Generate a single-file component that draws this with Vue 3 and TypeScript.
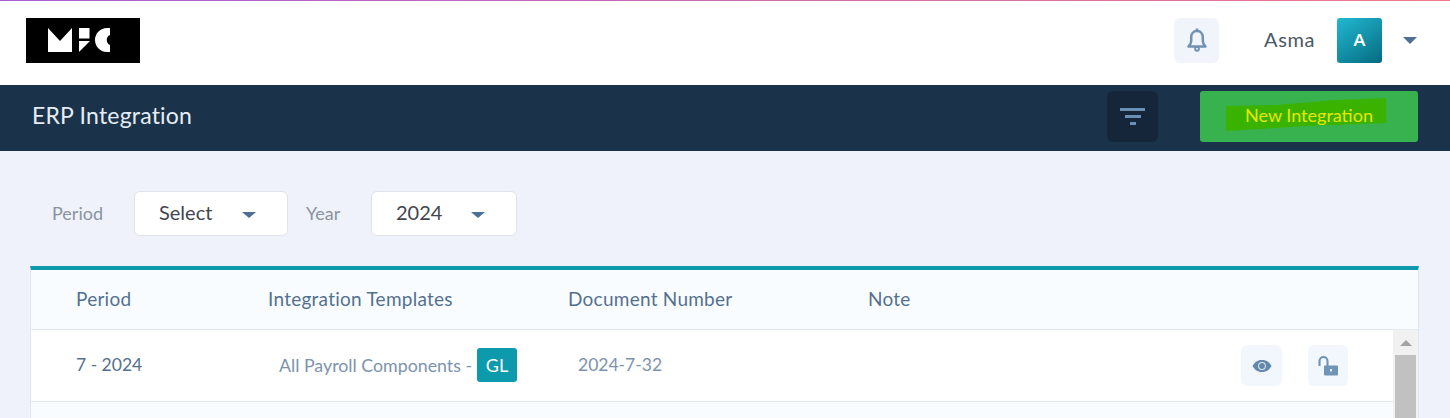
<script setup lang="ts">
interface Row {
  period: string
  template: string
  tag: string
  doc: string
}

const rows: Row[] = [
  { period: '7 - 2024', template: 'All Payroll Components -', tag: 'GL', doc: '2024-7-32' },
]
</script>

<template>
  <div class="page">
    <div class="progress"></div>
    <header class="topbar">
      <div class="logo">
        <svg width="62" height="24" viewBox="0 0 62 24">
          <path d="M0 0 L12 13 L24 0 V24 H0 Z" fill="#fff" />
          <rect x="31" y="0" width="10.5" height="10.5" fill="#fff" />
          <path d="M31 24 V13 H42 Z" fill="#fff" />
          <path d="M62 0 H59 A12 12 0 0 0 59 24 H62 V17 A5.5 5.5 0 0 1 62 7 Z" fill="#fff" />
        </svg>
      </div>
      <div class="top-right">
        <button class="bell">
          <svg width="20" height="24" viewBox="0 0 20 24" fill="none" stroke="#6f92b4" stroke-width="2.5">
            <path d="M10 3 C6 3 4.2 6 4.2 9.5 V13 C4.2 15.5 3.2 17 1.5 18.6 H18.5 C16.8 17 15.8 15.5 15.8 13 V9.5 C15.8 6 14 3 10 3 Z" stroke-linejoin="round" />
            <circle cx="10" cy="20.8" r="1.9" stroke-width="1.9" />
            <path d="M10 0.5 V3" />
          </svg>
        </button>
        <span class="user">Asma</span>
        <div class="avatar">A</div>
        <span class="caret user-caret"></span>
      </div>
    </header>

    <div class="subbar">
      <h1>ERP Integration</h1>
      <div class="sub-actions">
        <button class="filter-btn">
          <span class="f1"></span><span class="f2"></span><span class="f3"></span>
        </button>
        <button class="new-btn">
          <svg class="marker" width="160" height="33" viewBox="0 0 160 33" preserveAspectRatio="none">
            <path d="M0 8 L50 7 L110 2 L160 0 V25 L80 28 L0 33 Z" fill="#39b300" />
          </svg>
          <span>New Integration</span>
        </button>
      </div>
    </div>

    <main class="content">
      <div class="filters">
        <label class="lbl lbl-period">Period</label>
        <div class="select select-period">
          <span>Select</span><span class="caret"></span>
        </div>
        <label class="lbl lbl-year">Year</label>
        <div class="select select-year">
          <span>2024</span><span class="caret"></span>
        </div>
      </div>

      <section class="table">
        <div class="thead">
          <div class="c1">Period</div>
          <div class="c2">Integration Templates</div>
          <div class="c3">Document Number</div>
          <div class="c4">Note</div>
        </div>
        <div class="tbody">
          <div class="rows">
            <div v-for="r in rows" :key="r.doc" class="row">
              <div class="c1 period">{{ r.period }}</div>
              <div class="c2 tpl">{{ r.template }} <span class="tag">{{ r.tag }}</span></div>
              <div class="c3 doc">{{ r.doc }}</div>
              <div class="actions">
                <button class="act act-eye">
                  <svg width="20" height="14" viewBox="0 0 20 14">
                    <path d="M0.5 7 C3 2.5 6.2 1 10 1 C13.8 1 17 2.5 19.5 7 C17 11.5 13.8 13 10 13 C6.2 13 3 11.5 0.5 7 Z" fill="#6388ab" />
                    <circle cx="10" cy="7" r="3.9" fill="#dfe9f3" />
                    <circle cx="10" cy="7" r="2.9" fill="#6388ab" />
                  </svg>
                </button>
                <button class="act act-lock">
                  <svg width="20" height="22" viewBox="0 0 20 22">
                    <path d="M1.5 11 V6 A4 4 0 0 1 9.5 6 V11" fill="none" stroke="#6f94b6" stroke-width="2.1" />
                    <rect x="6" y="10.5" width="14" height="10" rx="1" fill="#6f94b6" />
                    <rect x="12.2" y="14" width="1.6" height="2.5" fill="#fff" />
                  </svg>
                </button>
              </div>
            </div>
            <div class="row row-alt"></div>
          </div>
          <div class="scrollbar">
            <div class="arrow"></div>
            <div class="thumb"></div>
          </div>
        </div>
      </section>
    </main>
  </div>
</template>

<style scoped>
.page {
  height: 418px;
  overflow: hidden;
  background: #eff2fb;
  font-family: Lato, "Open Sans", sans-serif;
}
.progress {
  height: 1px;
  background: linear-gradient(90deg, #a55fd6, #f2788c);
}
.topbar {
  height: 84px;
  background: #fff;
  display: flex;
  align-items: center;
  justify-content: space-between;
  padding: 0 33px 6px 26px;
  box-sizing: border-box;
}
.logo {
  width: 114px;
  height: 45px;
  background: #000;
  display: flex;
  align-items: center;
  justify-content: flex-start;
  padding-left: 22px;
  box-sizing: border-box;
}
.top-right {
  display: flex;
  align-items: center;
}
.bell {
  width: 45px;
  height: 45px;
  border: 0;
  padding: 0;
  border-radius: 6px;
  background: #f1f5fb;
  display: flex;
  align-items: center;
  justify-content: center;
  margin-right: 45px;
}
.user {
  font-size: 20px;
  letter-spacing: 0.6px;
  color: #4a5766;
  margin-right: 22px;
  padding-bottom: 3px;
}
.avatar {
  width: 45px;
  height: 45px;
  border-radius: 3px;
  background: linear-gradient(145deg, #22b8d2, #056b80);
  color: #fff;
  font-size: 17px;
  font-weight: 700;
  display: flex;
  align-items: center;
  justify-content: center;
  padding-bottom: 2px;
  box-sizing: border-box;
}
.caret {
  display: inline-block;
  width: 0;
  height: 0;
  border-left: 7px solid transparent;
  border-right: 7px solid transparent;
  border-top: 7px solid #4d6f95;
}
.user-caret {
  margin-left: 21px;
}
.subbar {
  height: 66px;
  background: #1b324b;
  display: flex;
  align-items: center;
  justify-content: space-between;
  padding: 0 32px 4px;
  box-sizing: border-box;
}
h1 {
  margin: 0;
  font-size: 23px;
  letter-spacing: 0.2px;
  font-weight: 400;
  color: #e6edf4;
  margin-bottom: 2px;
}
.sub-actions {
  display: flex;
  align-items: center;
  gap: 42px;
}
.filter-btn {
  width: 51px;
  height: 51px;
  border: 0;
  padding: 0;
  border-radius: 6px;
  background: #15263a;
  display: flex;
  flex-direction: column;
  align-items: center;
  justify-content: center;
  gap: 4px;
}
.filter-btn span {
  display: block;
  height: 3px;
  background: #6b90b6;
}
.f1 { width: 25px; }
.f2 { width: 16px; }
.f3 { width: 6px; }
.new-btn {
  position: relative;
  width: 218px;
  height: 51px;
  border: 0;
  padding: 0 0 2px;
  border-radius: 3px;
  background: #38b24e;
  color: #e6e600;
  font-family: inherit;
  font-size: 18px;
}
.new-btn span {
  position: relative;
}
.marker {
  position: absolute;
  left: 26px;
  top: 7px;
}
.content {
  padding: 40px 31px 0 30px;
}
.filters {
  display: flex;
  align-items: center;
  height: 45px;
  margin-bottom: 30px;
}
.lbl {
  font-size: 18px;
  color: #8a949e;
  padding-bottom: 2px;
}
.lbl-period {
  margin-left: 22px;
  width: 82px;
}
.lbl-year {
  margin-left: 18px;
  width: 65px;
}
.select {
  height: 45px;
  box-sizing: border-box;
  background: #fff;
  border: 1px solid #dfe3ea;
  border-radius: 6px;
  display: flex;
  align-items: center;
  justify-content: space-between;
  padding: 0 31px 4px 24px;
  font-size: 20px;
  color: #3f4650;
}
.select .caret {
  margin-top: 7px;
  border-top-width: 6px;
}
.select-period { width: 154px; }
.select-year { width: 146px; }
.table {
  border-top: 4px solid #0d9aac;
  border-left: 1px solid #e2e7ef;
  border-right: 1px solid #e2e7ef;
  background: #f9fcff;
}
.thead {
  display: flex;
  align-items: center;
  height: 60px;
  padding-bottom: 3px;
  box-sizing: border-box;
  border-bottom: 1px solid #e4e9f0;
  font-size: 19px;
  letter-spacing: 0.25px;
  color: #54708f;
}
.c1 { width: 192px; padding-left: 45px; box-sizing: content-box; flex: none; margin-right: -45px; }
.c2 { width: 300px; margin-left: 45px; flex: none; }
.c3 { width: 300px; flex: none; }
.c4 { flex: none; }
.tbody {
  display: flex;
}
.rows {
  flex: 1;
}
.row {
  display: flex;
  align-items: center;
  height: 72px;
  padding-bottom: 2px;
  box-sizing: border-box;
  border-bottom: 1px solid #e4e9f0;
  background: #fff;
  position: relative;
}
.row-alt {
  background: #f9fcff;
  border-bottom: 0;
}
.period {
  font-size: 17.5px;
  color: #54708f;
}
.tpl {
  font-size: 17.8px;
  color: #7b93ad;
  padding-left: 11px;
  box-sizing: border-box;
  display: flex;
  align-items: center;
  gap: 5px;
}
.tag {
  width: 40px;
  height: 34px;
  border-radius: 3px;
  background: #0d9aac;
  color: #fff;
  display: flex;
  align-items: center;
  justify-content: center;
  font-size: 18px;
}
.doc {
  font-size: 17.5px;
  color: #7b93ad;
  padding-left: 10px;
  box-sizing: border-box;
}
.actions {
  margin-left: auto;
  display: flex;
  gap: 26px;
  padding-right: 45px;
  margin-top: 2px;
}
.act {
  width: 41px;
  height: 41px;
  border: 0;
  padding: 0;
  border-radius: 6px;
  background: #f2f7fd;
  display: flex;
  align-items: center;
  justify-content: center;
}
.act-lock {
  width: 40px;
}
.scrollbar {
  width: 25px;
  flex: none;
  background: #f1f1f1;
  display: flex;
  flex-direction: column;
  align-items: center;
}
.arrow {
  margin-top: 10px;
  width: 0;
  height: 0;
  border-left: 6px solid transparent;
  border-right: 6px solid transparent;
  border-bottom: 6px solid #a3a3a3;
  margin-bottom: 9px;
}
.thumb {
  width: 21px;
  height: 100px;
  background: #c1c1c1;
}
</style>
